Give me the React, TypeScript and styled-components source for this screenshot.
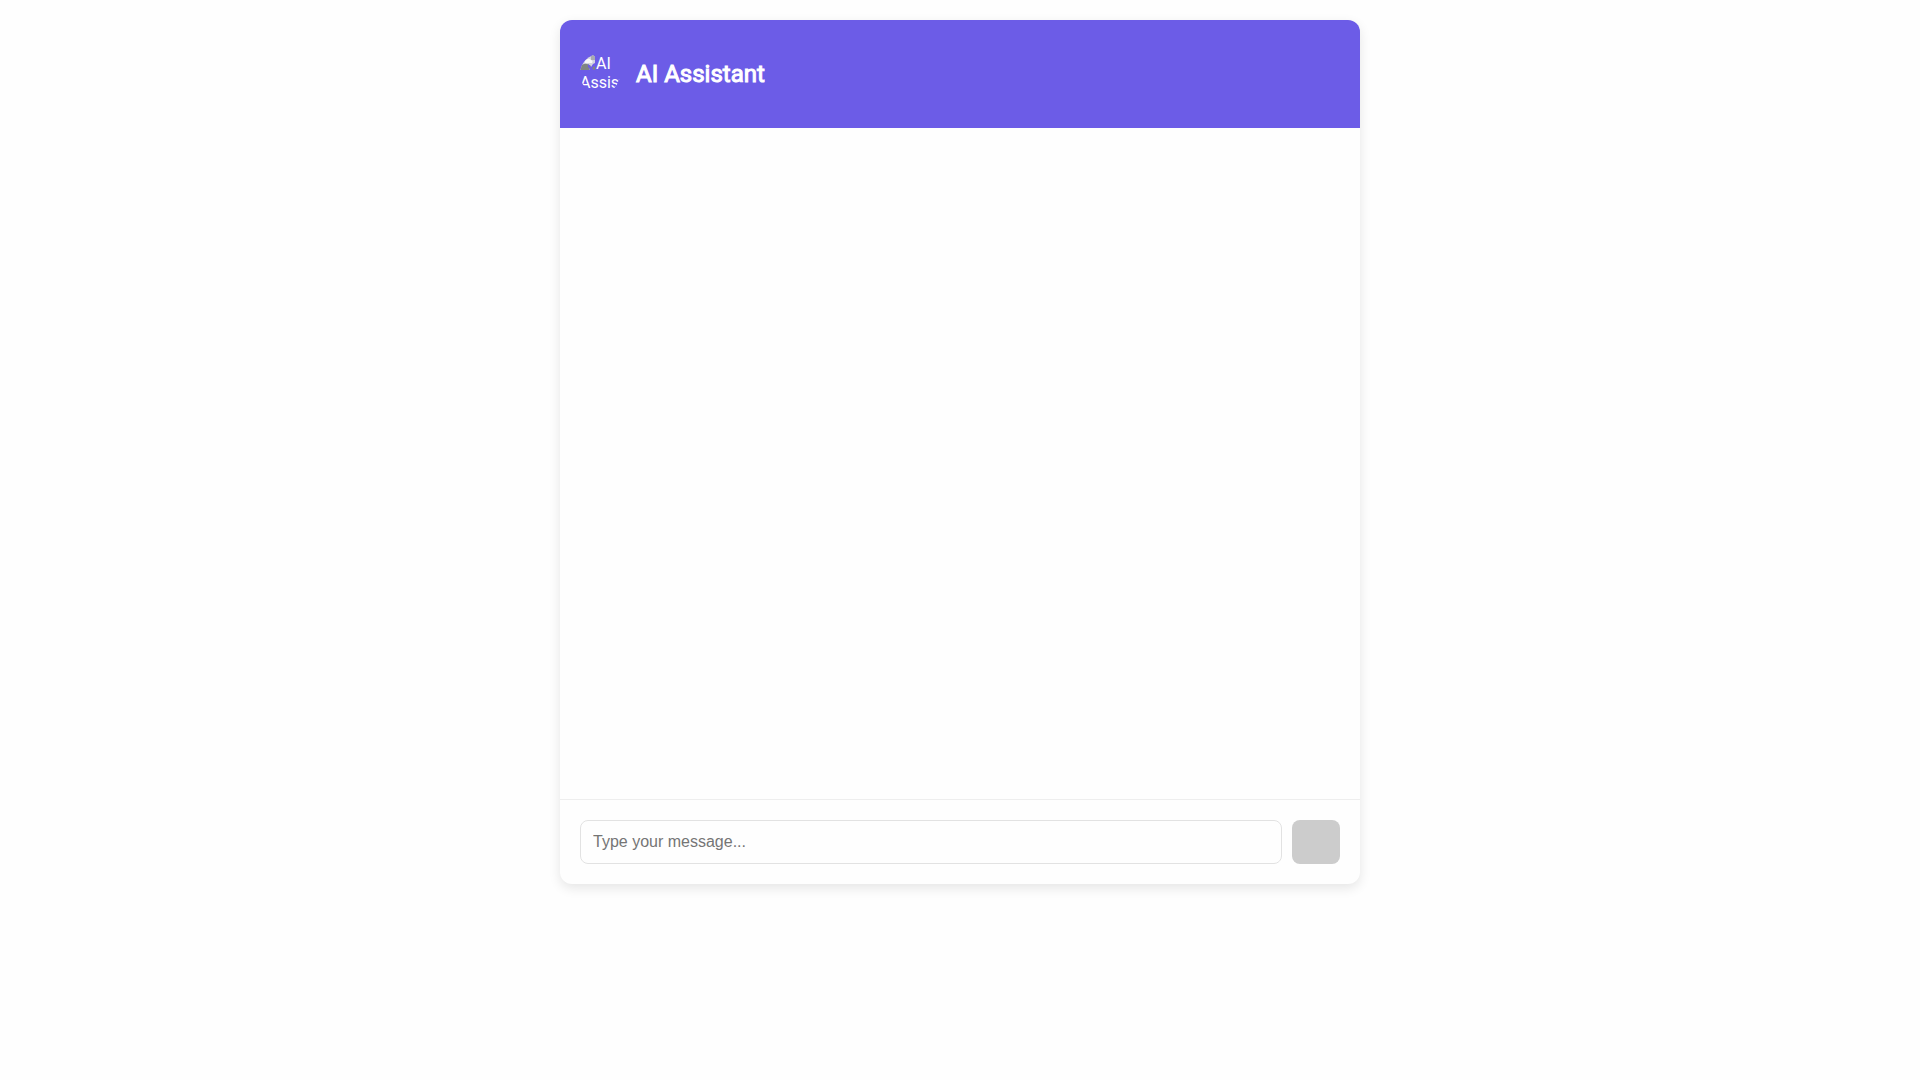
import React, { useState } from "react";
import styled, { createGlobalStyle } from "styled-components";

const GlobalStyle = createGlobalStyle`
  *, *::before, *::after {
    box-sizing: border-box;
  }
  body {
    margin: 0;
    background: #fefefe;
    font-family: Roboto, "Liberation Sans", sans-serif;
  }
`;

const ChatWindow = styled.main`
  display: flex;
  flex-direction: column;
  max-width: 800px;
  height: 80vh;
  margin: 20px auto;
  overflow: hidden;
  background: #fefefe;
  border-radius: 12px;
  box-shadow: 0 4px 12px rgba(0, 0, 0, 0.1);
`;

const Header = styled.header`
  display: flex;
  align-items: center;
  gap: 16px;
  padding: 20px;
  background: #6c5ce7;
  color: #fff;
`;

const Avatar = styled.div`
  flex: none;
  width: 40px;
  height: 40px;
  overflow: hidden;
  border-radius: 50%;
  font-size: 16px;
  line-height: normal;
`;

const MissingImage = styled.svg`
  float: left;
  width: 16px;
  height: 16px;
`;

const Title = styled.h2`
  margin: 20px 0;
  font-size: 24px;
  line-height: 28px;
  font-weight: 400;
  -webkit-text-stroke: 1px currentColor;
`;

const Messages = styled.section`
  flex: 1;
  padding: 20px;
  overflow-y: auto;
`;

const Composer = styled.form`
  display: flex;
  gap: 10px;
  padding: 20px;
  border-top: 1px solid #eee;
`;

const MessageInput = styled.input`
  flex: 1;
  min-width: 0;
  padding: 12px;
  background: #fefefe;
  border: 1px solid #e2e2e2;
  border-radius: 8px;
  font-family: "Liberation Sans", Arial, sans-serif;
  font-size: 16px;
  line-height: 18px;

  &::placeholder {
    color: #757575;
  }
`;

const SendButton = styled.button`
  width: 48px;
  padding: 12px;
  background: #6c5ce7;
  border: none;
  border-radius: 8px;
  cursor: pointer;

  &:disabled {
    background: #ccc;
    cursor: not-allowed;
  }
`;

export default function App() {
  const [message, setMessage] = useState("");

  return (
    <>
      <GlobalStyle />
      <ChatWindow>
        <Header>
          <Avatar>
            <MissingImage viewBox="0 0 16 16" aria-hidden="true">
              <path d="M0 1h13l2 2v6l-2 1-4 6H0z" fill="#d3d4de" />
              <path d="M11 1h2l2 2v3h-4z" fill="#a9abb2" />
              <path d="M5 9a2 2 0 0 1 1-3 3 3 0 0 1 5 0 2 2 0 0 1 1 3z" fill="#f7f7fa" />
              <path d="M0 16v-3c3-4 7-4 11-1l-2 4z" fill="#7f8482" />
              <path d="M15 12v4h-4l2-3z" fill="#7f8482" />
              <path d="M8 10l6 6h-3l-3-3z" fill="#6c5ce7" />
            </MissingImage>
            AI Assistant
          </Avatar>
          <Title>AI Assistant</Title>
        </Header>
        <Messages aria-label="Messages" />
        <Composer onSubmit={(event) => event.preventDefault()}>
          <MessageInput
            type="text"
            aria-label="Message"
            placeholder="Type your message..."
            value={message}
            onChange={(event) => setMessage(event.target.value)}
          />
          <SendButton type="submit" aria-label="Send" disabled={!message.trim()} />
        </Composer>
      </ChatWindow>
    </>
  );
}
